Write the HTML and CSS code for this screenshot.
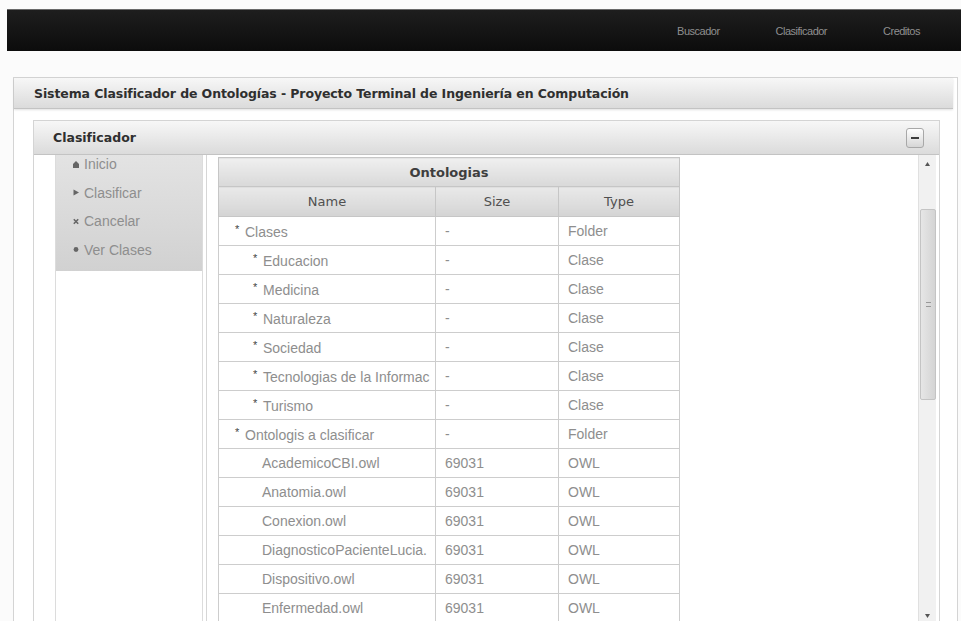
FILE: index.html
```html
<!DOCTYPE html>
<html lang="es">
<head>
<meta charset="utf-8">
<title>Sistema Clasificador de Ontologías</title>
<link rel="stylesheet" href="styles.css">
</head>
<body>
<header class="topbar">
  <nav class="nav">
    <a href="#">Buscador</a>
    <a href="#">Clasificador</a>
    <a href="#">Creditos</a>
  </nav>
</header>

<div class="panel outer">
  <div class="panel-head outer-head">Sistema Clasificador de Ontologías - Proyecto Terminal de Ingeniería en Computación</div>
  <div class="outer-body">
    <div class="panel inner">
      <div class="panel-head inner-head">
        <span>Clasificador</span>
        <button class="collapse" type="button" aria-label="Contraer"><span class="minus"></span></button>
      </div>
      <div class="layout">
        <aside class="west">
          <ul class="menu">
            <li><svg class="ico" viewBox="0 0 6 7"><polygon points="3,0 6,3 6,7 0,7 0,3"/></svg>Inicio</li>
            <li><svg class="ico" viewBox="0 0 6 7"><polygon points="0.5,0.5 6,3.5 0.5,6.5"/></svg>Clasificar</li>
            <li><svg class="ico" viewBox="0 0 6 7"><path d="M0.8 1.3 L5.2 5.7 M5.2 1.3 L0.8 5.7" stroke="#666" stroke-width="1.6" fill="none"/></svg>Cancelar</li>
            <li><svg class="ico" viewBox="0 0 6 7"><circle cx="3" cy="3.5" r="2.4"/></svg>Ver Clases</li>
          </ul>
        </aside>
        <section class="center">
          <div class="center-scroll">
            <table class="grid">
              <colgroup><col class="c-name"><col class="c-size"><col class="c-type"></colgroup>
              <thead>
                <tr class="title"><th colspan="3">Ontologias</th></tr>
                <tr class="cols"><th>Name</th><th>Size</th><th>Type</th></tr>
              </thead>
              <tbody>
                <tr><td class="l0"><span class="tw">*</span>Clases</td><td>-</td><td>Folder</td></tr>
                <tr><td class="l1"><span class="tw">*</span>Educacion</td><td>-</td><td>Clase</td></tr>
                <tr><td class="l1"><span class="tw">*</span>Medicina</td><td>-</td><td>Clase</td></tr>
                <tr><td class="l1"><span class="tw">*</span>Naturaleza</td><td>-</td><td>Clase</td></tr>
                <tr><td class="l1"><span class="tw">*</span>Sociedad</td><td>-</td><td>Clase</td></tr>
                <tr><td class="l1"><span class="tw">*</span>Tecnologias de la Informac</td><td>-</td><td>Clase</td></tr>
                <tr><td class="l1"><span class="tw">*</span>Turismo</td><td>-</td><td>Clase</td></tr>
                <tr><td class="l0"><span class="tw">*</span>Ontologis a clasificar</td><td>-</td><td>Folder</td></tr>
                <tr><td class="l2">AcademicoCBI.owl</td><td>69031</td><td>OWL</td></tr>
                <tr><td class="l2">Anatomia.owl</td><td>69031</td><td>OWL</td></tr>
                <tr><td class="l2">Conexion.owl</td><td>69031</td><td>OWL</td></tr>
                <tr><td class="l2">DiagnosticoPacienteLucia.</td><td>69031</td><td>OWL</td></tr>
                <tr><td class="l2">Dispositivo.owl</td><td>69031</td><td>OWL</td></tr>
                <tr><td class="l2">Enfermedad.owl</td><td>69031</td><td>OWL</td></tr>
              </tbody>
            </table>
          </div>
          <div class="vscroll">
            <div class="arrow"><svg viewBox="0 0 5 4"><polygon points="2.5,0 5,4 0,4"/></svg></div>
            <div class="track">
              <div class="thumb"><span class="grip"></span></div>
            </div>
            <div class="arrow"><svg viewBox="0 0 5 4"><polygon points="0,0 5,0 2.5,4"/></svg></div>
          </div>
        </section>
      </div>
    </div>
  </div>
</div>
</body>
</html>
```

FILE: styles.css
```css
html, body {
  margin: 0;
  height: 100%;
  overflow: hidden;
}

body {
  padding-top: 9px;
  box-sizing: border-box;
  background: #fbfbfb;
  font-family: "Liberation Sans", Arial, sans-serif;
}

/* top navigation bar */
.topbar {
  margin-left: 7px;
  height: 42px;
  background: linear-gradient(#1e1e1e, #0c0c0c);
  border-top: 1px solid #6a6a6a;
  box-sizing: border-box;
  display: flex;
  justify-content: flex-end;
  align-items: center;
  padding-right: 41px;
}

.nav {
  display: flex;
  gap: 56px;
}

.nav a {
  color: #8f8f8f;
  font-size: 11px;
  letter-spacing: -0.5px;
  text-decoration: none;
}

/* panels */
.panel {
  background: #fff;
  border: 1px solid #d4d4d4;
}

.panel-head {
  display: flex;
  align-items: center;
  background: linear-gradient(#f7f7f7, #dbdbdb);
  border-bottom: 1px solid #c3c3c3;
  font-family: "DejaVu Sans", Verdana, sans-serif;
  font-weight: bold;
  color: #2f2f2f;
}

.outer {
  margin: 26px 3px 0 13px;
  height: 600px;
}

.outer-head {
  height: 30px;
  margin-right: 4px;
  padding-left: 20px;
  font-size: 12.5px;
  letter-spacing: -0.1px;
  box-shadow: 0 1px 2px rgba(0, 0, 0, 0.12);
}

.outer-body {
  padding: 11px 17px 0 19px;
}

.inner-head {
  height: 33px;
  padding: 0 15px 0 19px;
  justify-content: space-between;
  font-size: 12.5px;
}

.collapse {
  width: 18px;
  height: 20px;
  padding: 0;
  border: 1px solid #a8a8a8;
  border-radius: 3px;
  background: linear-gradient(#fefefe, #d6d6d6);
  display: flex;
  align-items: center;
  justify-content: center;
}

.minus {
  width: 8px;
  height: 2px;
  background: #3c3c3c;
}

/* body of the classifier panel */
.layout {
  height: 470px;
  display: flex;
  padding-left: 21px;
}

.west {
  width: 146px;
  border-left: 1px solid #dcdcdc;
  border-right: 1px solid #dcdcdc;
}

.menu {
  list-style: none;
  margin: 0;
  padding: 0 0 12px 17px;
  display: flex;
  flex-direction: column;
  gap: 10.5px;
  background: linear-gradient(#e3e3e3, #d1d1d1);
}

.menu li {
  line-height: 18px;
  font-size: 14px;
  color: #8e8e8e;
  display: flex;
  align-items: center;
}

.ico {
  width: 6px;
  height: 7px;
  margin-right: 5px;
  fill: #666;
}

.center {
  flex: 1;
  margin-left: 3px;
  border-left: 1px solid #d6d6d6;
  display: flex;
}

.center-scroll {
  flex: 1;
  padding: 2px 0 0 11px;
  overflow: hidden;
}

/* ontology tree table */
.grid {
  border-collapse: collapse;
  table-layout: fixed;
  width: 461px;
}

.c-name { width: 217px; }
.c-size { width: 123px; }
.c-type { width: 121px; }

.grid th {
  font-family: "DejaVu Sans", Verdana, sans-serif;
  font-size: 13px;
  color: #505050;
  border: 1px solid #c6c6c6;
  padding: 0;
}

.grid .title th {
  height: 28px;
  font-weight: bold;
  color: #3e3e3e;
  background: linear-gradient(#efefef, #d9d9d9);
}

.grid .cols th {
  height: 29px;
  font-weight: normal;
  background: linear-gradient(#e9e9e9, #d4d4d4);
}

.grid td {
  height: 28px;
  padding: 0 0 0 9px;
  border: 1px solid #cdcdcd;
  font-size: 14px;
  color: #8e8e8e;
  white-space: nowrap;
  overflow: hidden;
}

.grid td.l0 { padding-left: 16px; }
.grid td.l1 { padding-left: 34px; }
.grid td.l2 { padding-left: 43px; }

.tw {
  display: inline-block;
  width: 5px;
  margin-right: 5px;
  font-size: 11px;
  color: #444;
  vertical-align: 4px;
}

/* vertical scrollbar */
.vscroll {
  width: 17px;
  margin-right: 3px;
  background: #f1f1f1;
  border-left: 1px solid #e0e0e0;
  display: flex;
  flex-direction: column;
}

.arrow {
  height: 18px;
  display: flex;
  align-items: center;
  justify-content: center;
}

.arrow svg {
  width: 5px;
  height: 4px;
  fill: #555;
}

.track {
  flex: 1;
}

.thumb {
  margin: 36px 0 0 1px;
  width: 14px;
  height: 189px;
  background: linear-gradient(90deg, #e6e6e6, #d4d4d4);
  border: 1px solid #c4c4c4;
  border-radius: 2px;
  display: flex;
  align-items: center;
  justify-content: center;
}

.grip {
  width: 5px;
  height: 5px;
  border-top: 1px solid #999;
  border-bottom: 1px solid #999;
  box-sizing: border-box;
}
```
